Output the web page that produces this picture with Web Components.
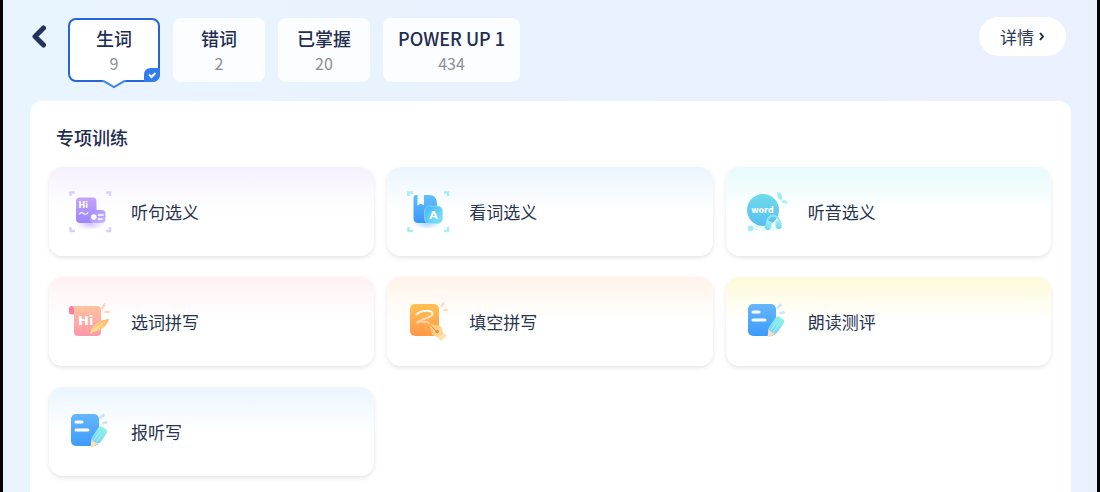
<!DOCTYPE html>
<html lang="zh-CN">
<head>
<meta charset="utf-8">
<meta name="viewport" content="width=device-width, initial-scale=1">
<title>专项训练</title>
<style>
  html { background: #000; }
  body { margin: 0; font-family: "Noto Sans CJK SC", sans-serif; color: #1f2d50; }
</style>
</head>
<body>
<word-app>
  <back-button slot="header"></back-button>
  <word-tab slot="tabs" selected><span>生词</span><span slot="count">9</span></word-tab>
  <word-tab slot="tabs"><span>错词</span><span slot="count">2</span></word-tab>
  <word-tab slot="tabs"><span>已掌握</span><span slot="count">20</span></word-tab>
  <word-tab slot="tabs"><span>POWER UP 1</span><span slot="count">434</span></word-tab>
  <detail-link slot="action">详情</detail-link>
  <training-panel>
    <span slot="title">专项训练</span>
    <training-card icon="sentence" tint="#f5f1fe">听句选义</training-card>
    <training-card icon="book" tint="#eaf5ff">看词选义</training-card>
    <training-card icon="word" tint="#e6fbfc">听音选义</training-card>
    <training-card icon="scroll" tint="#fff1f4">选词拼写</training-card>
    <training-card icon="pen" tint="#fff3e8">填空拼写</training-card>
    <training-card icon="note" tint="#fffad8">朗读测评</training-card>
    <training-card icon="note" tint="#eaf5ff">报听写</training-card>
  </training-panel>
</word-app>

<script>
const define = (name, html, setup) => {
  const template = document.createElement('template');
  template.innerHTML = html;
  customElements.define(name, class extends HTMLElement {
    constructor() {
      super();
      this.attachShadow({ mode: 'open' }).append(template.content.cloneNode(true));
    }
    connectedCallback() { if (setup) setup(this, this.shadowRoot); }
  });
};

const corners = color => `
  <path d="M1.500 6V2.500H6M37 2.500H41V6M41 37V41H37M6 41H1.500V37" fill="none" stroke="${color}" stroke-width="2.500"/>`;

const icons = {
  sentence: `
    <defs>
      <linearGradient id="a" x2="0" y2="1"><stop stop-color="#c4a4fb"/><stop offset="1" stop-color="#9a86f8"/></linearGradient>
      <linearGradient id="b" x2="1" y2="1"><stop stop-color="#a98cfa"/><stop offset="1" stop-color="#c9b6ff"/></linearGradient>
      <radialGradient id="s"><stop stop-color="#b79bff" stop-opacity=".6"/><stop offset="1" stop-color="#b79bff" stop-opacity="0"/></radialGradient>
    </defs>
    ${corners('#dbd0f9')}
    <ellipse cx="21" cy="34" rx="15" ry="6" fill="url(#s)"/>
    <rect x="7" y="7.500" width="20.500" height="25.500" rx="4" fill="url(#a)"/>
    <text x="9.500" y="17.500" font-family="DejaVu Sans, sans-serif" font-size="8" font-weight="700" fill="#fff">Hi</text>
    <path d="M10.500 24C12 21.500 13.500 22.500 14.500 23.500S17.500 25 19 22.500" fill="none" stroke="#f0e9ff" stroke-width="1.400" stroke-linecap="round"/>
    <rect x="21" y="20" width="15.500" height="13" rx="4" fill="url(#b)"/>
    <circle cx="24.800" cy="27" r="2.700" fill="#fff"/>
    <path d="M29.500 25H34M29.500 29H33" stroke="#fff" stroke-width="1.600" stroke-linecap="round"/>`,
  book: `
    <defs>
      <linearGradient id="a" x2="0" y2="1"><stop stop-color="#63bdff"/><stop offset="1" stop-color="#3b95fa"/></linearGradient>
      <linearGradient id="b" x2="1" y2="1"><stop stop-color="#43b5f8"/><stop offset="1" stop-color="#7fe6f8"/></linearGradient>
      <radialGradient id="s"><stop stop-color="#5ab0ff" stop-opacity=".5"/><stop offset="1" stop-color="#5ab0ff" stop-opacity="0"/></radialGradient>
    </defs>
    ${corners('#a6edf4')}
    <ellipse cx="20" cy="34" rx="14" ry="5" fill="url(#s)"/>
    <path d="M9 5H22Q30 5 30 14V33H11Q6.500 33 6.500 28V8Q6.500 5 9 5Z" fill="url(#a)"/>
    <path d="M10.500 4.500H17V15.500L13.800 13.500L10.500 15.500Z" fill="#f2fbff"/>
    <rect x="17.500" y="16" width="18" height="17.500" rx="5" fill="url(#b)" stroke="#8fe4fb" stroke-width=".6"/>
    <text x="26.500" y="29" text-anchor="middle" font-family="DejaVu Sans, sans-serif" font-size="11" font-weight="700" fill="#fff">A</text>`,
  word: `
    <defs>
      <linearGradient id="a" x2="0" y2="1"><stop stop-color="#6fdbe8"/><stop offset="1" stop-color="#58bff2"/></linearGradient>
      <linearGradient id="b" x2="0" y2="1"><stop stop-color="#a5f0f5"/><stop offset="1" stop-color="#6ad8ee"/></linearGradient>
    </defs>
    <ellipse cx="20" cy="37" rx="15" ry="4" fill="#e6fafc"/>
    <circle cx="17" cy="20" r="16" fill="url(#a)"/>
    <text x="16.500" y="23" text-anchor="middle" font-family="DejaVu Sans, sans-serif" font-size="8" font-weight="700" fill="#fff">word</text>
    <path d="M21 34C20 23 34 23 34 34" fill="none" stroke="#8de5f2" stroke-width="2"/>
    <rect x="19.500" y="31" width="6" height="9" rx="3" fill="url(#b)" transform="rotate(15 22 35)"/>
    <rect x="29.500" y="30" width="6" height="9" rx="3" fill="url(#b)" transform="rotate(-5 32 34)"/>
    <circle cx="28" cy="36" r="1" fill="#fff"/>
    <path d="M31.500 2C35 2 37 6 35.500 10C32 10 31 5 31.500 2Z" fill="#9eebf1"/>
    <path d="M35 11C38 9 40 10 42 12.500C39 14.500 36 13.500 35 11Z" fill="#b4f0f3"/>
    <circle cx="4.500" cy="38.500" r="3" fill="#a8eef1"/>`,
  scroll: `
    <defs>
      <linearGradient id="a" x2="0" y2="1"><stop stop-color="#ffc39e"/><stop offset="1" stop-color="#fd97aa"/></linearGradient>
      <linearGradient id="b" x1="1" x2="0" y2="1"><stop stop-color="#ffb46d"/><stop offset="1" stop-color="#ffe388"/></linearGradient>
    </defs>
    <rect x="0" y="6" width="8" height="8.500" rx="2.500" fill="#f97d9e"/>
    <path d="M3 6H28Q32 6 32 10V32Q32 36 28 36H9Q5 36 5 32V10Q5 7 3 6Z" fill="url(#a)"/>
    <text x="9" y="24.500" font-family="DejaVu Sans, sans-serif" font-size="13" font-weight="700" fill="#fff">Hi</text>
    <path d="M21 34C23 24 31 20 40 19C38 27 31 31 24 32L21.500 34.500Z" fill="url(#b)"/>
    <path d="M22 33L34 23" stroke="#fff0b8" stroke-width=".8"/>
    <path d="M33 8L35.500 4.500M36.500 12H39.500" stroke="#ffd5bd" stroke-width="2.400" stroke-linecap="round"/>`,
  pen: `
    <defs>
      <linearGradient id="a" x2="0" y2="1"><stop stop-color="#ffc154"/><stop offset="1" stop-color="#ff9848"/></linearGradient>
      <linearGradient id="b" x2="1" y2="1"><stop stop-color="#ffca78"/><stop offset="1" stop-color="#ffd79b"/></linearGradient>
      <linearGradient id="c" x2="0" y2="1"><stop stop-color="#fff"/><stop offset="1" stop-color="#fff" stop-opacity=".4"/></linearGradient>
    </defs>
    <rect x="3" y="4" width="29" height="32" rx="5" fill="url(#a)"/>
    <path d="M9.500 14.500C14 10 25 9.500 25.500 14C25.500 18 14 18.500 10 22.500C14 21.500 18 21.500 22 23" fill="none" stroke="url(#c)" stroke-width="2" stroke-linecap="round" stroke-linejoin="round"/>
    <path d="M22 23.500L34 26.500L36.500 34L32.500 38L25.500 35Z" fill="url(#b)"/>
    <path d="M36.500 33L40 36L34 41L31 37.500Z" fill="#ffe1b1"/>
    <path d="M22.500 24L29 31" stroke="#f28d3c" stroke-width="1"/><circle cx="30" cy="31.500" r="1.800" fill="#f28d3c"/>
    <path d="M34.500 6L36.500 3.500M37.500 10.500L40 9.500" stroke="#ffdcc0" stroke-width="2.400" stroke-linecap="round"/>`,
  note: `
    <defs>
      <linearGradient id="a" x2="0" y2="1"><stop stop-color="#65b7fb"/><stop offset="1" stop-color="#3c9bfb"/></linearGradient>
      <linearGradient id="b" x2="0" y2="1"><stop stop-color="#8df4e3"/><stop offset="1" stop-color="#79d2fa"/></linearGradient>
    </defs>
    <rect x="2" y="4" width="28" height="32" rx="5" fill="url(#a)"/>
    <path d="M7 12H13M7 20H19" stroke="#fff" stroke-width="3" stroke-linecap="round"/>
    <g transform="rotate(35 29 27)">
      <path d="M24.500 32H33.500L29.800 38.500Q29 39.500 28.200 38.500Z" fill="#ffdfb2"/>
      <rect x="24" y="16" width="10" height="17" rx="3.500" fill="url(#b)"/>
      <path d="M27.500 22V32M30.500 22V32" stroke="#aaf6f0" stroke-width=".8"/>
    </g>
    <path d="M32 7.500L34.500 5M34.500 13L37.500 12.500" stroke="#c9e4fc" stroke-width="2.600" stroke-linecap="round"/>`
};

define('word-app', `
  <style>
    :host { display: flex; flex-direction: column; min-height: 100vh; box-sizing: border-box; border: solid #000; border-width: 0 3px;
      padding: 17px 26px 0 27px; background: linear-gradient(90deg, #e9f5fe, #e9f2fe 50%, #ebf0ff); }
    header { display: flex; align-items: flex-start; padding-right: 5px; margin-bottom: 19px; }
    nav { display: flex; gap: 13px; flex: 1; padding-top: 1px; }
    ::slotted(training-panel) { flex: 1; }
  </style>
  <header><slot name="header"></slot><nav><slot name="tabs"></slot></nav><slot name="action"></slot></header>
  <slot></slot>`);

define('back-button', `
  <style>
    :host { display: block; width: 38px; }
    button { display: block; border: 0; padding: 8px 2px; background: none; cursor: pointer; }
    svg { display: block; }
  </style>
  <button aria-label="返回"><svg width="14" height="23" viewBox="0 0 14 23"><path d="M11.500 3L3 11.500L11.500 20" fill="none" stroke="#23325a" stroke-width="5" stroke-linecap="round" stroke-linejoin="round"/></svg></button>`);

define('word-tab', `
  <style>
    :host { display: block; position: relative; }
    button { display: block; box-sizing: border-box; min-width: 92px; height: 64px; padding: 5px 13px; border: 2px solid #fbfdff;
      border-radius: 8px; background: #fbfdff; font: inherit; color: inherit; text-align: center; cursor: pointer; }
    .name { display: block; font-size: 18px; font-weight: 500; line-height: 26px; white-space: nowrap; }
    .count { display: block; font-size: 16px; line-height: 24px; color: #8b9098; }
    svg { display: none; position: absolute; }
    :host([selected]) button { border-color: #2864d2; background: #fff; }
    :host([selected]) svg { display: block; }
    .tip { left: 34px; bottom: -7px; }
    .check { right: 0; bottom: 0; }
  </style>
  <button><span class="name"><slot></slot></span><span class="count"><slot name="count"></slot></span></button>
  <svg class="tip" width="24" height="9" viewBox="0 0 24 9"><path d="M0 0H24V1L20 2L12 7.500L4 2L0 1Z" fill="#fff"/><path d="M0 1Q2 1 4 2.300L12 7L20 2.300Q22 1 24 1" fill="none" stroke="#3f84e6" stroke-width="2"/></svg>
  <svg class="check" width="16" height="14" viewBox="0 0 16 14"><path d="M7 0H16V6Q16 14 8 14H0V7Q0 0 7 0Z" fill="#317df0"/><path d="M5 6.500L7.500 9L11.500 5" fill="none" stroke="#fff" stroke-width="2"/></svg>`);

define('detail-link', `
  <style>
    :host { display: block; }
    button { display: flex; align-items: center; gap: 5px; height: 39px; padding: 0 22px 0 21px; border: 0; border-radius: 20px;
      background: #fff; font: inherit; font-size: 17px; color: #2b3857; cursor: pointer; }
  </style>
  <button><slot></slot><svg width="5" height="9" viewBox="0 0 5 9"><path d="M1 1L4 4.500L1 8" fill="none" stroke="#1c2740" stroke-width="1.900"/></svg></button>`);

define('training-panel', `
  <style>
    :host { display: block; box-sizing: border-box; padding: 23px 20px 16px 19px; border-radius: 12px 12px 0 0; background: #fff; }
    h2 { margin: 0 0 17px; padding-left: 7px; font-size: 18px; font-weight: 500; line-height: 26px; }
    div { display: grid; grid-template-columns: repeat(3, 1fr); gap: 21px 13px; }
  </style>
  <h2><slot name="title"></slot></h2>
  <div><slot></slot></div>`);

define('training-card', `
  <style>
    :host { display: block; }
    button { display: flex; align-items: center; gap: 19px; box-sizing: border-box; width: 100%; height: 89px; padding: 0 20px; border: 0;
      border-radius: 14px; background: linear-gradient(var(--tint), #fff 50%); box-shadow: 0 2px 4px rgba(40, 45, 60, .12);
      font: inherit; font-size: 17px; line-height: 26px; color: #27344f; text-align: left; cursor: pointer; }
  </style>
  <button><training-icon></training-icon><span><slot></slot></span></button>`,
  (host, root) => {
    host.style.setProperty('--tint', host.getAttribute('tint'));
    root.querySelector('training-icon').setAttribute('name', host.getAttribute('icon'));
  });

customElements.define('training-icon', class extends HTMLElement {
  static observedAttributes = ['name'];
  constructor() { super(); this.attachShadow({ mode: 'open' }); }
  attributeChangedCallback(_, __, name) {
    this.shadowRoot.innerHTML = `
      <style>:host { display: block; flex: none; } svg { display: block; }</style>
      <svg width="43" height="43" viewBox="0 0 43 43" aria-hidden="true">${icons[name]}</svg>`;
  }
});
</script>
</body>
</html>
